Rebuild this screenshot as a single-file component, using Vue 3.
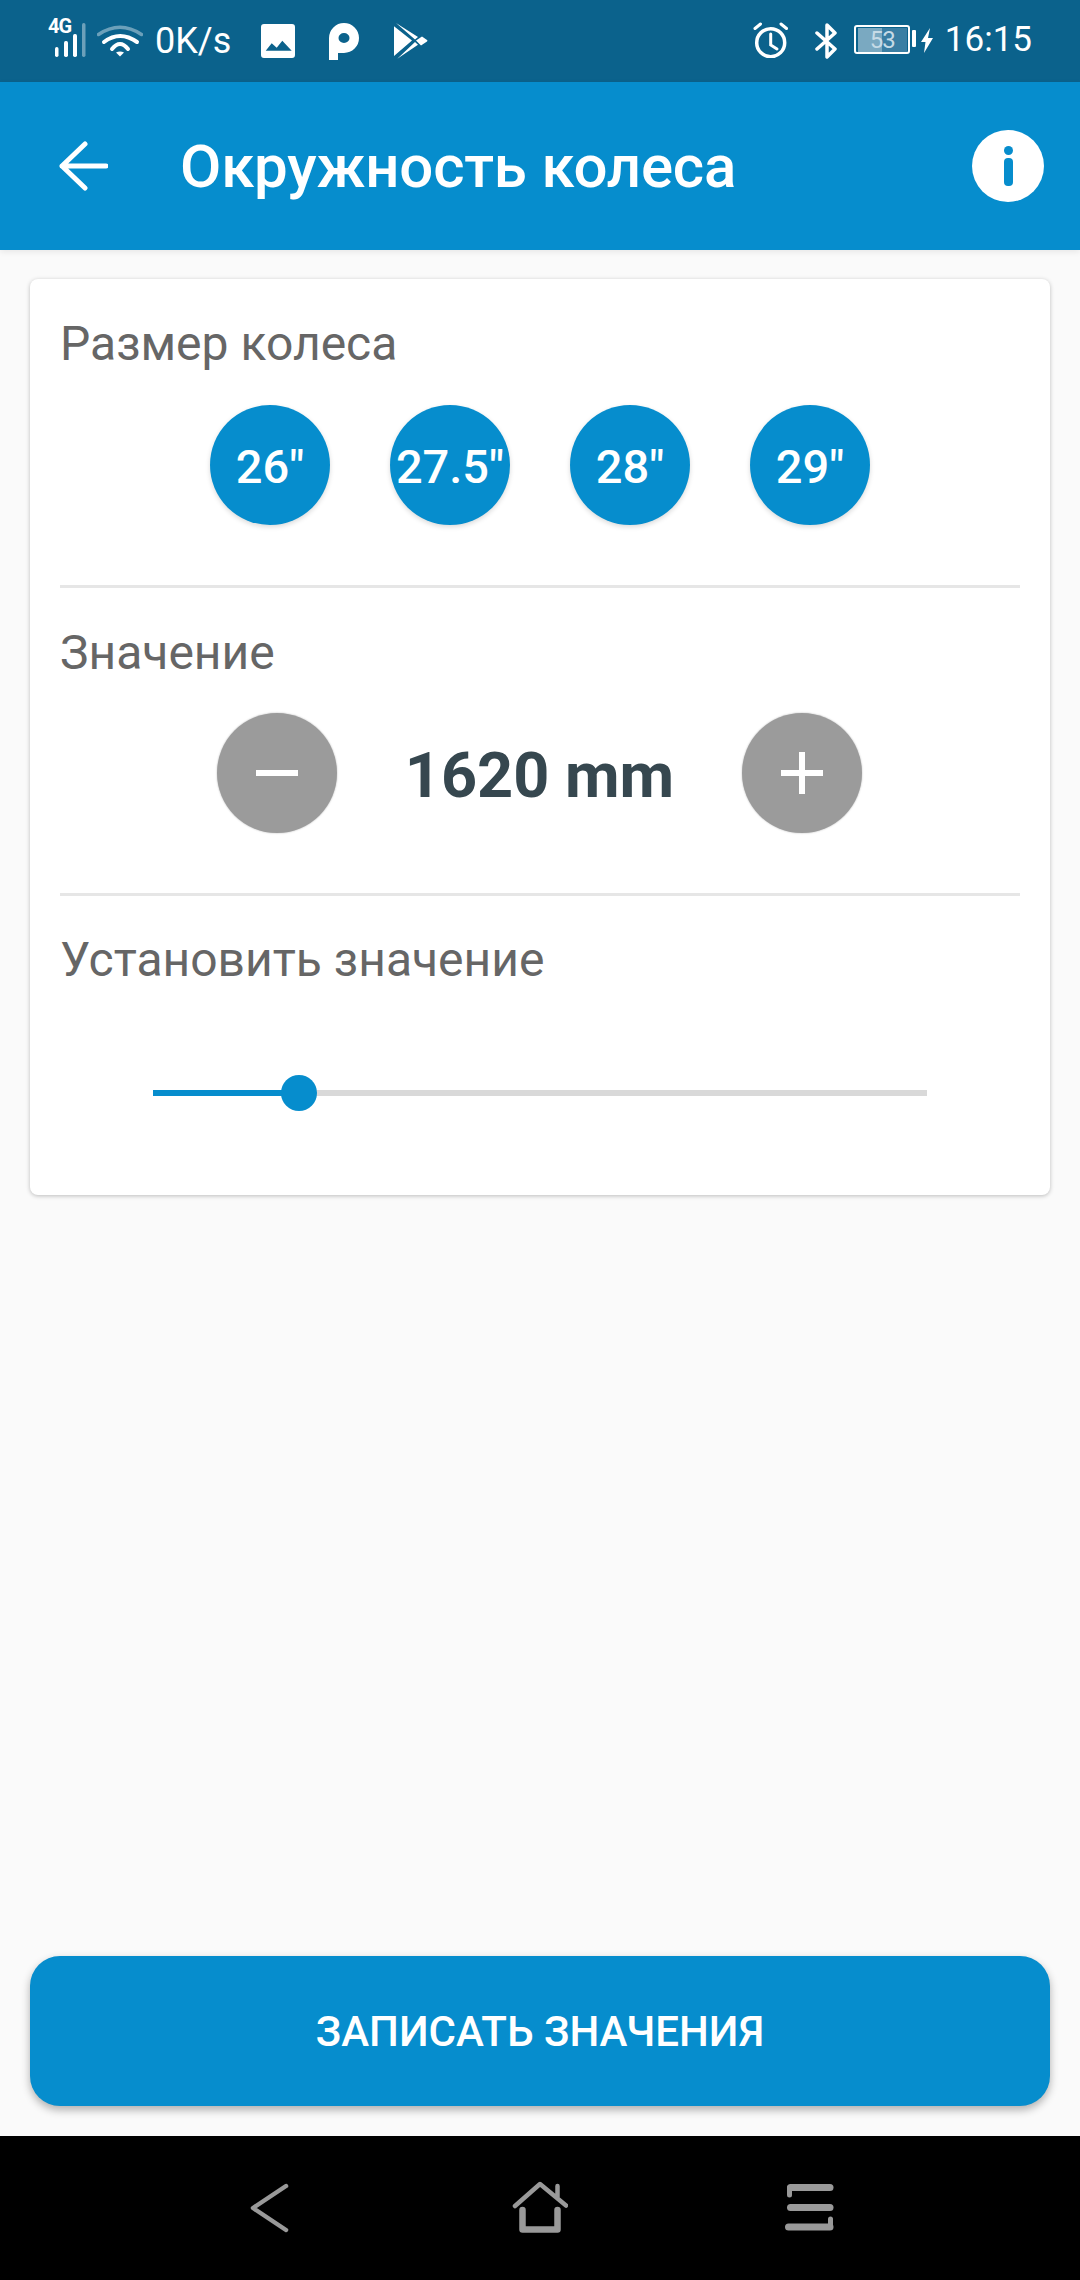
<template>
  <div class="page">
    <div class="status-bar">
      <div class="status-left">
        <div class="signal">
          <span class="net">4G</span>
          <svg width="38" height="38" viewBox="0 0 38 38">
            <rect x="7" y="28" width="3.500" height="10" rx="1.700" fill="#fff" />
            <rect x="16" y="22" width="4" height="16" rx="1.700" fill="#fff" />
            <rect x="25" y="15" width="4" height="23" rx="1.700" fill="#fff" />
            <rect x="34" y="4" width="3.500" height="34" rx="1.700" fill="#fff" opacity="0.4" />
          </svg>
        </div>
        <svg class="wifi" width="46" height="32" viewBox="0 0 46 32" fill="none" stroke="#fff" stroke-linecap="round">
          <path d="M1.500 9.500Q23 -5 44.500 9.500" stroke-width="3.500" opacity="0.4" />
          <path d="M7 17Q23 5 40 17" stroke-width="4" />
          <path d="M15 24Q23 14 31 24" stroke-width="4" />
          <path d="M19 27.500Q23 25.500 27 27.500L23 31.500Z" fill="#fff" stroke="none" />
        </svg>
        <span class="speed">0K/s</span>
        <svg class="ic-image" width="34" height="34" viewBox="0 0 34 34">
          <path fill="#fff" fill-rule="evenodd" d="M3 0H31A3 3 0 0 1 34 3V31A3 3 0 0 1 31 34H3A3 3 0 0 1 0 31V3A3 3 0 0 1 3 0ZM4.700 26.700H30.700L21.300 16.700L15.700 23.700L10.700 19.300Z" />
        </svg>
        <svg class="ic-p" width="30" height="37" viewBox="0 0 30 37">
          <path fill="#fff" fill-rule="evenodd" d="M0 37V15A15 15 0 1 1 15 30H9V37ZM9.500 15A5.500 5 0 1 0 20.500 15A5.500 5 0 1 0 9.500 15Z" />
        </svg>
        <svg class="ic-play" width="34" height="36" viewBox="0 0 34 36">
          <path fill="#fff" d="M0 3.300L18 17.500L0 33ZM2 0L24 14L21 16.500ZM3.300 35.700L24 21.700L21 19ZM22 17.500L28 13.500L33 17Q34 17.800 33 18.500L27 22.500Z" />
        </svg>
      </div>
      <div class="status-right">
        <svg class="ic-alarm" width="35" height="36" viewBox="0 0 35 36" fill="none" stroke="#fff" stroke-width="3.500" stroke-linecap="round">
          <circle cx="17.700" cy="20.700" r="14" />
          <path d="M17.700 12V23L24 27" stroke-width="3" />
          <path d="M2 6.500L7.500 2M28 2L33.500 6.500" stroke-width="3" />
        </svg>
        <svg class="ic-bt" width="23" height="36" viewBox="0 0 23 36" fill="none" stroke="#fff" stroke-width="3.500" stroke-linecap="round" stroke-linejoin="round">
          <path d="M2 10L20 26L12 34V2L20 10L2 26" />
        </svg>
        <div class="battery">
          <div class="battery-fill">53</div>
        </div>
        <span class="battery-nub"></span>
        <svg class="ic-bolt" width="12" height="25" viewBox="0 0 12 25">
          <path fill="#fff" d="M9 0L0 14H4.500L3 25L12 10H7Z" />
        </svg>
        <span class="clock">16:15</span>
      </div>
    </div>

    <header class="app-bar">
      <svg class="back" width="50" height="50" viewBox="0 0 50 50" fill="none" stroke="#fff" stroke-width="5" stroke-linecap="round" stroke-linejoin="round">
        <path d="M4 25H48M27 3L4 25L27 47" />
      </svg>
      <h1>Окружность колеса</h1>
      <div class="info"><span></span><span></span></div>
    </header>

    <main class="content">
      <section class="card">
        <div class="block block-size">
          <h2>Размер колеса</h2>
          <div class="sizes">
            <div class="size" v-for="size in sizes" :key="size">{{ size }}</div>
          </div>
        </div>
        <div class="block block-value">
          <h2>Значение</h2>
          <div class="stepper">
            <div class="step"><span class="bar-h"></span></div>
            <div class="value">1620 mm</div>
            <div class="step"><span class="bar-h"></span><span class="bar-v"></span></div>
          </div>
        </div>
        <div class="block block-slider">
          <h2>Установить значение</h2>
          <div class="slider">
            <div class="track-fill" :style="{ width: sliderPos + 'px' }"></div>
            <div class="thumb" :style="{ left: sliderPos + 'px' }"></div>
          </div>
        </div>
      </section>
      <button class="save">ЗАПИСАТЬ ЗНАЧЕНИЯ</button>
    </main>

    <nav class="nav-bar">
      <svg width="40" height="50" viewBox="0 0 40 50" fill="none" stroke="#999" stroke-width="4.500" stroke-linecap="round" stroke-linejoin="round">
        <path d="M37 3L4 25L37 47" />
      </svg>
      <svg class="nav-home" width="56" height="54" viewBox="0 0 56 54" fill="none" stroke="#999" stroke-width="4.500" stroke-linecap="round" stroke-linejoin="round">
        <path d="M3 25L28 3L54 24.500M45.500 5V16" />
        <path d="M10.500 29V48.500H45.500V29" stroke-width="6.500" />
      </svg>
      <svg class="nav-menu" width="50" height="48" viewBox="0 0 50 48" fill="none" stroke="#999" stroke-width="7" stroke-linecap="round" stroke-linejoin="round">
        <path d="M5.500 3.500H45" />
        <path d="M4.500 3.500V11" stroke-width="5" />
        <path d="M5.500 23.500H45" />
        <path d="M3.500 43H45" />
        <path d="M45.500 43V35" stroke-width="5" />
      </svg>
    </nav>
  </div>
</template>

<script setup>
const sizes = ['26"', '27.5"', '28"', '29"']
const sliderPos = 146
</script>

<style>
html, body {
  margin: 0;
  background: #fafafa;
}
</style>

<style scoped>
.page {
  width: 1080px;
  height: 2280px;
  display: flex;
  flex-direction: column;
  font-family: Roboto, "Noto Sans", sans-serif;
  background: #fafafa;
}

.status-bar {
  height: 82px;
  flex: none;
  background: #0b628c;
  color: #fff;
  display: flex;
  justify-content: space-between;
  padding: 0 48px;
  box-sizing: border-box;
}

.status-left,
.status-right {
  display: flex;
  align-items: flex-start;
}

.signal {
  position: relative;
  width: 38px;
  height: 38px;
  margin-top: 19px;
}

.signal svg {
  display: block;
}

.net {
  position: absolute;
  left: 0;
  top: -3px;
  font-size: 20px;
  font-weight: 700;
  line-height: 20px;
  letter-spacing: -1px;
}

.wifi {
  margin: 25px 0 0 11px;
}

.speed {
  width: 78px;
  font-size: 36px;
  line-height: 40px;
  margin: 21px 0 0 12px;
}

.ic-image {
  margin: 24px 0 0 28px;
}

.ic-p {
  margin: 23px 0 0 34px;
}

.ic-play {
  margin: 23px 0 0 35px;
}

.ic-alarm {
  margin-top: 22px;
}

.ic-bt {
  margin: 23px 0 0 27px;
}

.battery {
  width: 56px;
  height: 29px;
  margin: 25px 0 0 16px;
  border: 2px solid #fff;
  border-radius: 3px;
  padding: 1px 1px 0 2px;
  box-sizing: border-box;
}

.battery-fill {
  height: 100%;
  background: linear-gradient(90deg, #7aa9c1 0 49%, #3a7ea3 49%);
  font-size: 24px;
  line-height: 24px;
  letter-spacing: -1px;
  text-align: center;
  color: #c6dbe6;
}

.battery-nub {
  width: 4px;
  height: 17px;
  margin: 30px 0 0 2px;
  background: #fff;
  border-radius: 1px;
}

.ic-bolt {
  margin: 28px 0 0 5px;
}

.clock {
  font-size: 35px;
  line-height: 40px;
  margin: 20px 0 0 12px;
}

.app-bar {
  height: 168px;
  flex: none;
  background: #068dcd;
  color: #fff;
  display: flex;
  align-items: center;
  padding: 0 36px 0 58px;
  box-sizing: border-box;
  box-shadow: 0 2px 6px rgba(0, 0, 0, 0.08);
}

.back {
  flex: none;
}

.app-bar h1 {
  flex: 1;
  margin: 0 0 0 72px;
  font-size: 60px;
  font-weight: 500;
  letter-spacing: -0.2px;
}

.info {
  width: 72px;
  height: 72px;
  border-radius: 50%;
  background: #fff;
  display: flex;
  flex-direction: column;
  align-items: center;
  justify-content: center;
  gap: 3px;
}

.info span:first-child {
  width: 9px;
  height: 9px;
  border-radius: 50%;
  background: #068dcd;
}

.info span:last-child {
  width: 9px;
  height: 28px;
  border-radius: 4px;
  background: #068dcd;
}

.content {
  flex: 1;
  display: flex;
  flex-direction: column;
  justify-content: space-between;
  padding: 29px 30px 30px;
}

.card {
  background: #fff;
  height: 916px;
  box-sizing: border-box;
  border-radius: 8px;
  padding: 0 30px;
  box-shadow: 0 1px 4px rgba(0, 0, 0, 0.25);
}

.block {
  box-sizing: border-box;
  padding-top: 38px;
  border-bottom: 3px solid #e6e6e6;
}

.block-size {
  height: 309px;
}

.block-value {
  height: 308px;
}

.block-slider {
  padding-top: 37px;
  border-bottom: 0;
}

h2 {
  margin: 0;
  font-size: 48px;
  font-weight: 400;
  line-height: 54px;
  color: #666;
}

.sizes {
  display: flex;
  justify-content: center;
  gap: 60px;
  margin-top: 34px;
}

.size {
  width: 120px;
  height: 120px;
  border-radius: 50%;
  background: #068dcd;
  color: #fff;
  font-size: 47px;
  font-weight: 500;
  display: flex;
  align-items: center;
  justify-content: center;
  padding-top: 2px;
  box-sizing: border-box;
  white-space: nowrap;
  box-shadow: 0 2px 5px rgba(0, 0, 0, 0.15);
}

.stepper {
  display: flex;
  justify-content: center;
  align-items: center;
  margin-top: 33px;
  padding-right: 1px;
}

.value {
  width: 405px;
  text-align: center;
  font-size: 63px;
  font-weight: 700;
  color: #36474f;
  padding-top: 5px;
}

.step {
  position: relative;
  width: 120px;
  height: 120px;
  border-radius: 50%;
  background: #9b9b9b;
  box-shadow: 0 0 2px rgba(0, 0, 0, 0.3);
}

.bar-h,
.bar-v {
  position: absolute;
  background: #fff;
}

.bar-h {
  left: 39px;
  top: 57px;
  width: 42px;
  height: 6px;
}

.bar-v {
  left: 57px;
  top: 39px;
  width: 6px;
  height: 42px;
}

.slider {
  position: relative;
  margin: 103px 0 0 93px;
  height: 6px;
  width: 774px;
  background: #d9d9d9;
}

.track-fill {
  height: 100%;
  background: #068dcd;
}

.thumb {
  position: absolute;
  top: -15px;
  width: 36px;
  height: 36px;
  margin-left: -18px;
  border-radius: 50%;
  background: #068dcd;
}

.save {
  height: 150px;
  border: 0;
  border-radius: 30px;
  background: #068dcd;
  color: #fff;
  font-family: inherit;
  font-size: 42px;
  font-weight: 500;
  box-shadow: 0 4px 8px rgba(0, 0, 0, 0.3);
}

.nav-bar {
  height: 144px;
  flex: none;
  background: #000;
  display: flex;
  align-items: center;
  padding-left: 249px;
}

.nav-home {
  margin-left: 223px;
}

.nav-menu {
  margin-left: 217px;
}
</style>
